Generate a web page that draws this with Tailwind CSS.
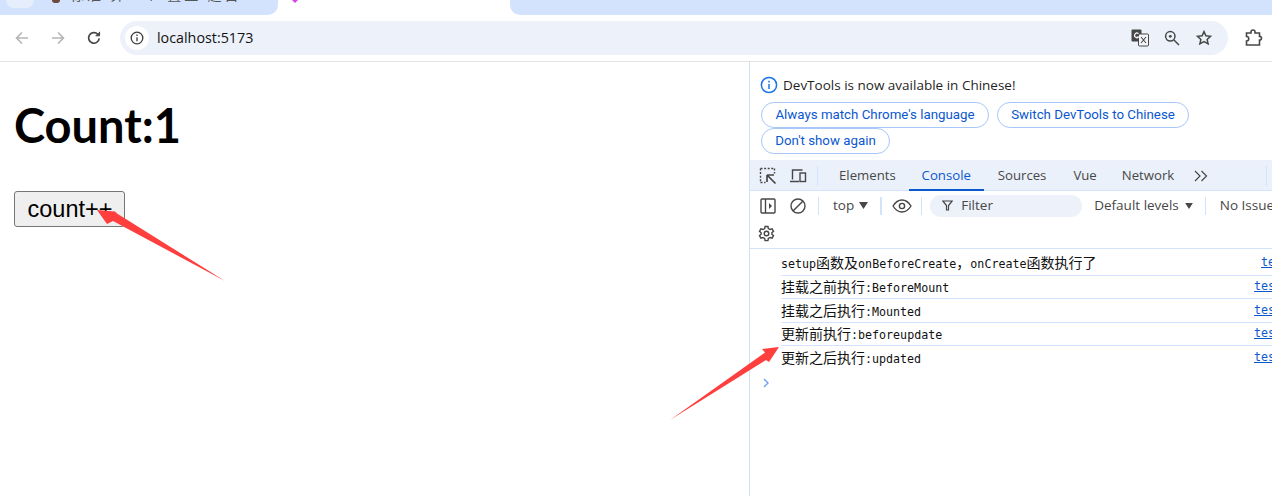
<!DOCTYPE html>
<html lang="en">
<head>
    <meta charset="UTF-8">
    <title>localhost:5173</title>
    <script src="https://cdn.jsdelivr.net/npm/@tailwindcss/browser@4"></script>
</head>
<body class="relative h-[496px] w-[1272px] overflow-hidden bg-white font-['Open_Sans',sans-serif]">
    <!-- tab strip -->
    <div class="flex h-[15px] overflow-hidden">
        <div class="h-full w-[278px] shrink-0 rounded-br-[10px] bg-[#d3e3fd] pl-[6px]">
            <div class="flex">
                <div class="h-[8px] w-[28px] rounded-b-[8px] bg-[#e6eefb]"></div>
                <div class="ml-[18px] h-[3px] w-[8px] rounded-b-full bg-[#6b4a3f]"></div>
                <div class="ml-[10px] mt-[-13px] whitespace-nowrap font-['Noto_Sans_CJK_SC',sans-serif] text-[14px] leading-[14px] tracking-[3px] text-[#555]">标准 算一个 置盘 题目</div>
            </div>
        </div>
        <div class="h-full w-[232px] shrink-0 pl-[14px]">
            <svg class="h-[3px] w-[6px]" viewBox="0 0 6 3"><path d="M0 0h6L3 3z" fill="#d93ee8"/></svg>
        </div>
        <div class="h-full flex-1 rounded-bl-[10px] bg-[#d3e3fd]"></div>
    </div>

    <!-- browser toolbar -->
    <div class="flex h-[47px] items-center border-b border-[#e2e3e5] pl-[14px] pb-[1px]">
        <svg class="h-[16px] w-[16px]" viewBox="0 0 16 16" fill="none" stroke="#b4b6b9" stroke-width="1.6"><path d="M14 8H2.500M8 2.500 2.500 8 8 13.500"/></svg>
        <svg class="ml-[20px] h-[16px] w-[16px]" viewBox="0 0 16 16" fill="none" stroke="#b4b6b9" stroke-width="1.6"><path d="M2 8h11.500M8 2.500 13.500 8 8 13.500"/></svg>
        <svg class="ml-[20px] h-[16px] w-[16px]" viewBox="0 0 16 16" fill="none" stroke="#474747" stroke-width="1.7"><path d="M13.200 8.400A5.300 5.300 0 1 1 11.800 4.300"/><path d="M13.600 1.800v4h-4" fill="#474747" stroke-width="1"/></svg>
        <div class="ml-[18px] flex h-[34px] w-[1108px] items-center rounded-full bg-[#ecf1fa] pl-[5px]">
            <div class="flex h-[24px] w-[24px] items-center justify-center rounded-full bg-white">
                <svg class="h-[14px] w-[14px]" viewBox="0 0 14 14" fill="none" stroke="#3c3c3c" stroke-width="1.3"><circle cx="7" cy="7" r="5.800"/><path d="M7 6.200v4M7 3.600v1.300"/></svg>
            </div>
            <span class="ml-[8px] text-[14.3px] text-[#111]">localhost:5173</span>
            <svg class="ml-auto h-[18px] w-[18px]" viewBox="0 0 18 18"><rect x="0.5" y="0.5" width="10" height="12" rx="1" fill="#474747"/><rect x="7.500" y="5" width="10" height="12" rx="1" fill="#f4f6fa" stroke="#474747"/><path d="M7.600 4.600A2.400 2.400 0 1 0 7.800 8H5.600" fill="none" stroke="#fff" stroke-width="1.100"/><path d="M10 8l5 6M15 8l-5 6" stroke="#474747" stroke-width="1.100"/></svg>
            <svg class="ml-[15px] h-[16px] w-[16px]" viewBox="0 0 16 16" fill="none" stroke="#474747" stroke-width="1.5"><circle cx="6.300" cy="6.300" r="4.700"/><circle cx="6.300" cy="6.300" r="1.400" fill="#474747" stroke="none"/><path d="M10 10l5 5"/></svg>
            <svg class="ml-[16px] h-[16px] w-[16px]" viewBox="0 0 16 16" fill="none" stroke="#474747" stroke-width="1.5"><path d="M8 1.600l1.900 4.200 4.600.5-3.400 3.100 1 4.500L8 11.600l-4.100 2.300 1-4.500L1.500 6.300l4.600-.5z"/></svg>
            <div class="w-[16px]"></div>
        </div>
        <svg class="ml-[17px] h-[18px] w-[18px]" viewBox="0 0 18 18" fill="none" stroke="#474747" stroke-width="1.6"><path d="M1.500 4h4.500V3a2 2 0 0 1 4 0v1h4.500v3.500h1a2 2 0 0 1 0 3.500h-1v5H1.500v-4a2.200 2.200 0 0 0 0-4.500z"/></svg>
    </div>

    <!-- page + devtools -->
    <div class="flex h-[434px]">
        <div class="w-[749px] shrink-0 pl-[14px]">
            <h1 class="mt-[33px] font-['Lato',sans-serif] text-[47px] font-bold leading-[60px] text-black">Count:1</h1>
            <button class="mt-[36px] h-[36px] w-[111px] rounded-[3px] border border-[#767676] bg-[#efefef] pl-[1px] pt-[1px] font-['Liberation_Sans',sans-serif] text-[23.5px] leading-none text-black">count++</button>
        </div>

        <div class="min-w-0 flex-1 border-l border-[#d3e0f3]">
            <!-- language infobar -->
            <div class="h-[99px] border-b border-[#ebeff7] pl-[10px] pt-[13px]">
                <div class="flex h-[20px] items-center">
                    <svg class="h-[18px] w-[18px]" viewBox="0 0 18 18" fill="none" stroke="#1a73e8" stroke-width="1.5"><circle cx="9" cy="9" r="7.600"/><path d="M9 8v5M9 4.800v1.600"/></svg>
                    <span class="ml-[5px] text-[13.5px] text-[#1f1f1f]">DevTools is now available in Chinese!</span>
                </div>
                <div class="ml-[1px] mt-[7px] flex gap-[8px] font-['Roboto',sans-serif] text-[13.3px] text-[#0b57d0]">
                    <div class="flex h-[26px] w-[228px] items-center justify-center rounded-full border border-[#a8c7fa]">Always match Chrome's language</div>
                    <div class="flex h-[26px] w-[192px] items-center justify-center rounded-full border border-[#a8c7fa]">Switch DevTools to Chinese</div>
                </div>
                <div class="ml-[1px] flex h-[26px] w-[129px] items-center justify-center rounded-full border border-[#a8c7fa] font-['Roboto',sans-serif] text-[13.3px] text-[#0b57d0]">Don't show again</div>
            </div>

            <!-- panel tabs -->
            <div class="flex h-[30px] items-center border-b border-[#d3e3fd] bg-[#ebf1fa] pl-[9px] text-[13.2px] text-[#474747]">
                <svg class="h-[18px] w-[18px]" viewBox="0 0 18 18" fill="none" stroke="#474747" stroke-width="1.4"><path d="M1.500 1.500h14M1.500 1.500v14M15.500 1.500v5M1.500 15.500h5" stroke-dasharray="2 1.600"/><path d="M8 8h7M8 8v7M8 8l8.500 8.500" stroke-width="1.700"/></svg>
                <svg class="ml-[12px] h-[18px] w-[18px]" viewBox="0 0 18 18" fill="none" stroke="#474747" stroke-width="1.4"><path d="M3.500 12.500V3h10M1 14.500h9"/><rect x="11" y="6" width="5.500" height="8.500"/></svg>
                <div class="ml-[10px] h-[20px] w-px bg-[#d3e3fd]"></div>
                <div class="ml-[21px]">Elements</div>
                <div class="relative ml-[13px] flex h-full w-[75px] items-center justify-center text-[#0b57d0]">Console<div class="absolute bottom-[-1px] left-0 h-[2px] w-full bg-[#0b57d0]"></div></div>
                <div class="ml-[14px]">Sources</div>
                <div class="ml-[27px]">Vue</div>
                <div class="ml-[25px]">Network</div>
                <svg class="ml-[20px] h-[12px] w-[14px]" viewBox="0 0 14 12" fill="none" stroke="#474747" stroke-width="1.2"><path d="M1 1l5 5-5 5M7.500 1l5 5-5 5"/></svg>
                <div class="ml-[58px] h-[20px] w-px bg-[#d3e3fd]"></div>
            </div>

            <!-- console toolbar -->
            <div class="flex h-[28px] items-center whitespace-nowrap pl-[10px] pt-[1px] text-[13.5px] text-[#474747]">
                <svg class="h-[16px] w-[16px] shrink-0" viewBox="0 0 16 16" fill="none" stroke="#474747" stroke-width="1.4"><rect x="1" y="1" width="14" height="14" rx="1"/><path d="M5.500 1v14"/><path d="M9 5l3 3-3 3z" fill="#474747" stroke="none"/></svg>
                <svg class="ml-[14px] h-[16px] w-[16px] shrink-0" viewBox="0 0 16 16" fill="none" stroke="#474747" stroke-width="1.4"><circle cx="8" cy="8" r="7"/><path d="M3 13L13 3"/></svg>
                <div class="ml-[12px] h-[18px] w-px shrink-0 bg-[#d3e3fd]"></div>
                <span class="ml-[14px]">top</span>
                <svg class="ml-[5px] h-[7px] w-[9px] shrink-0" viewBox="0 0 9 7"><path d="M0 0h9L4.500 7z" fill="#474747"/></svg>
                <div class="ml-[12px] h-[18px] w-[2px] shrink-0 bg-[#d3e3fd]"></div>
                <svg class="ml-[10px] h-[14px] w-[20px] shrink-0" viewBox="0 0 20 14" fill="none" stroke="#474747" stroke-width="1.4"><path d="M1 7c2.500-4 5.500-6 9-6s6.500 2 9 6c-2.500 4-5.500 6-9 6S3.500 11 1 7z"/><circle cx="10" cy="7" r="2.600"/></svg>
                <div class="ml-[9px] h-[18px] w-px shrink-0 bg-[#d3e3fd]"></div>
                <div class="ml-[8px] flex h-[22px] w-[152px] shrink-0 items-center rounded-full bg-[#ecf1fa] pl-[12px]">
                    <svg class="h-[11px] w-[11px]" viewBox="0 0 11 11" fill="none" stroke="#474747" stroke-width="1.2"><path d="M.8 1h9.400L6.500 5.500V10H4.500V5.500z"/></svg>
                    <span class="ml-[8px]">Filter</span>
                </div>
                <span class="ml-[12px]">Default levels</span>
                <svg class="ml-[6px] h-[6px] w-[8px] shrink-0" viewBox="0 0 9 7"><path d="M0 0h9L4.500 7z" fill="#474747"/></svg>
                <div class="ml-[12px] h-[18px] w-px shrink-0 bg-[#d3e3fd]"></div>
                <span class="ml-[14px]">No Issues</span>
            </div>
            <div class="flex h-[30px] items-center border-b border-[#d3e3fd] pl-[8px]">
                <svg class="h-[17px] w-[17px]" viewBox="0 0 24 24" fill="none" stroke="#474747" stroke-width="2"><circle cx="12" cy="12" r="3.200"/><path d="M10 2h4l.6 3 2.400 1.400 2.900-1 2 3.500-2.300 2v2.200l2.300 2-2 3.500-2.900-1-2.400 1.400-.6 3h-4l-.6-3L7 17.600l-2.900 1-2-3.500 2.300-2v-2.200l-2.300-2 2-3.500 2.900 1L9.400 5z"/></svg>
            </div>

            <!-- console messages -->
            <div class="pl-[31px] pt-[3px] font-['DejaVu_Sans_Mono',monospace] text-[11.67px] text-[#111]">
                <div class="flex h-[24px] items-center justify-between border-b border-[#d3e3fd] pb-[1px]">
                    <div class="whitespace-nowrap">setup<span class="font-['Noto_Sans_CJK_SC',sans-serif] text-[14px]">函数及</span>onBeforeCreate<span class="font-['Noto_Sans_CJK_SC',sans-serif] text-[14px]">，</span>onCreate<span class="font-['Noto_Sans_CJK_SC',sans-serif] text-[14px]">函数执行了</span></div>
                    <div class="w-[11px] overflow-hidden whitespace-nowrap text-[#0b57d0] underline">test.vue:10</div>
                </div>
                <div class="flex h-[23px] items-center justify-between border-b border-[#d3e3fd]">
                    <div class="whitespace-nowrap"><span class="font-['Noto_Sans_CJK_SC',sans-serif] text-[14px]">挂载之前执行</span>:BeforeMount</div>
                    <div class="w-[18px] overflow-hidden whitespace-nowrap text-[#0b57d0] underline">test.vue:13</div>
                </div>
                <div class="flex h-[24px] items-center justify-between border-b border-[#d3e3fd]">
                    <div class="whitespace-nowrap"><span class="font-['Noto_Sans_CJK_SC',sans-serif] text-[14px]">挂载之后执行</span>:Mounted</div>
                    <div class="w-[18px] overflow-hidden whitespace-nowrap text-[#0b57d0] underline">test.vue:16</div>
                </div>
                <div class="flex h-[23px] items-center justify-between border-b border-[#d3e3fd]">
                    <div class="whitespace-nowrap"><span class="font-['Noto_Sans_CJK_SC',sans-serif] text-[14px]">更新前执行</span>:beforeupdate</div>
                    <div class="w-[18px] overflow-hidden whitespace-nowrap text-[#0b57d0] underline">test.vue:19</div>
                </div>
                <div class="flex h-[24px] items-center justify-between">
                    <div class="whitespace-nowrap"><span class="font-['Noto_Sans_CJK_SC',sans-serif] text-[14px]">更新之后执行</span>:updated</div>
                    <div class="w-[18px] overflow-hidden whitespace-nowrap text-[#0b57d0] underline">test.vue:22</div>
                </div>
            </div>
            <svg class="ml-[13px] mt-[8px] h-[10px] w-[7px]" viewBox="0 0 7 10" fill="none" stroke="#6ea0f0" stroke-width="1.400"><path d="M1 1l4 4-4 4"/></svg>
        </div>
    </div>

    <!-- red annotation arrows drawn over the screenshot -->
    <svg class="absolute left-0 top-0 h-[496px] w-[1272px]" viewBox="0 0 1272 496" fill="#ff3e3e">
        <path d="M97 210L115 211.500 117 213.500 225 281 113 221 107 224z"/>
        <path d="M779 347L762 349 765 352.500 670 420 766 360 769 362z"/>
    </svg>
</body>
</html>
